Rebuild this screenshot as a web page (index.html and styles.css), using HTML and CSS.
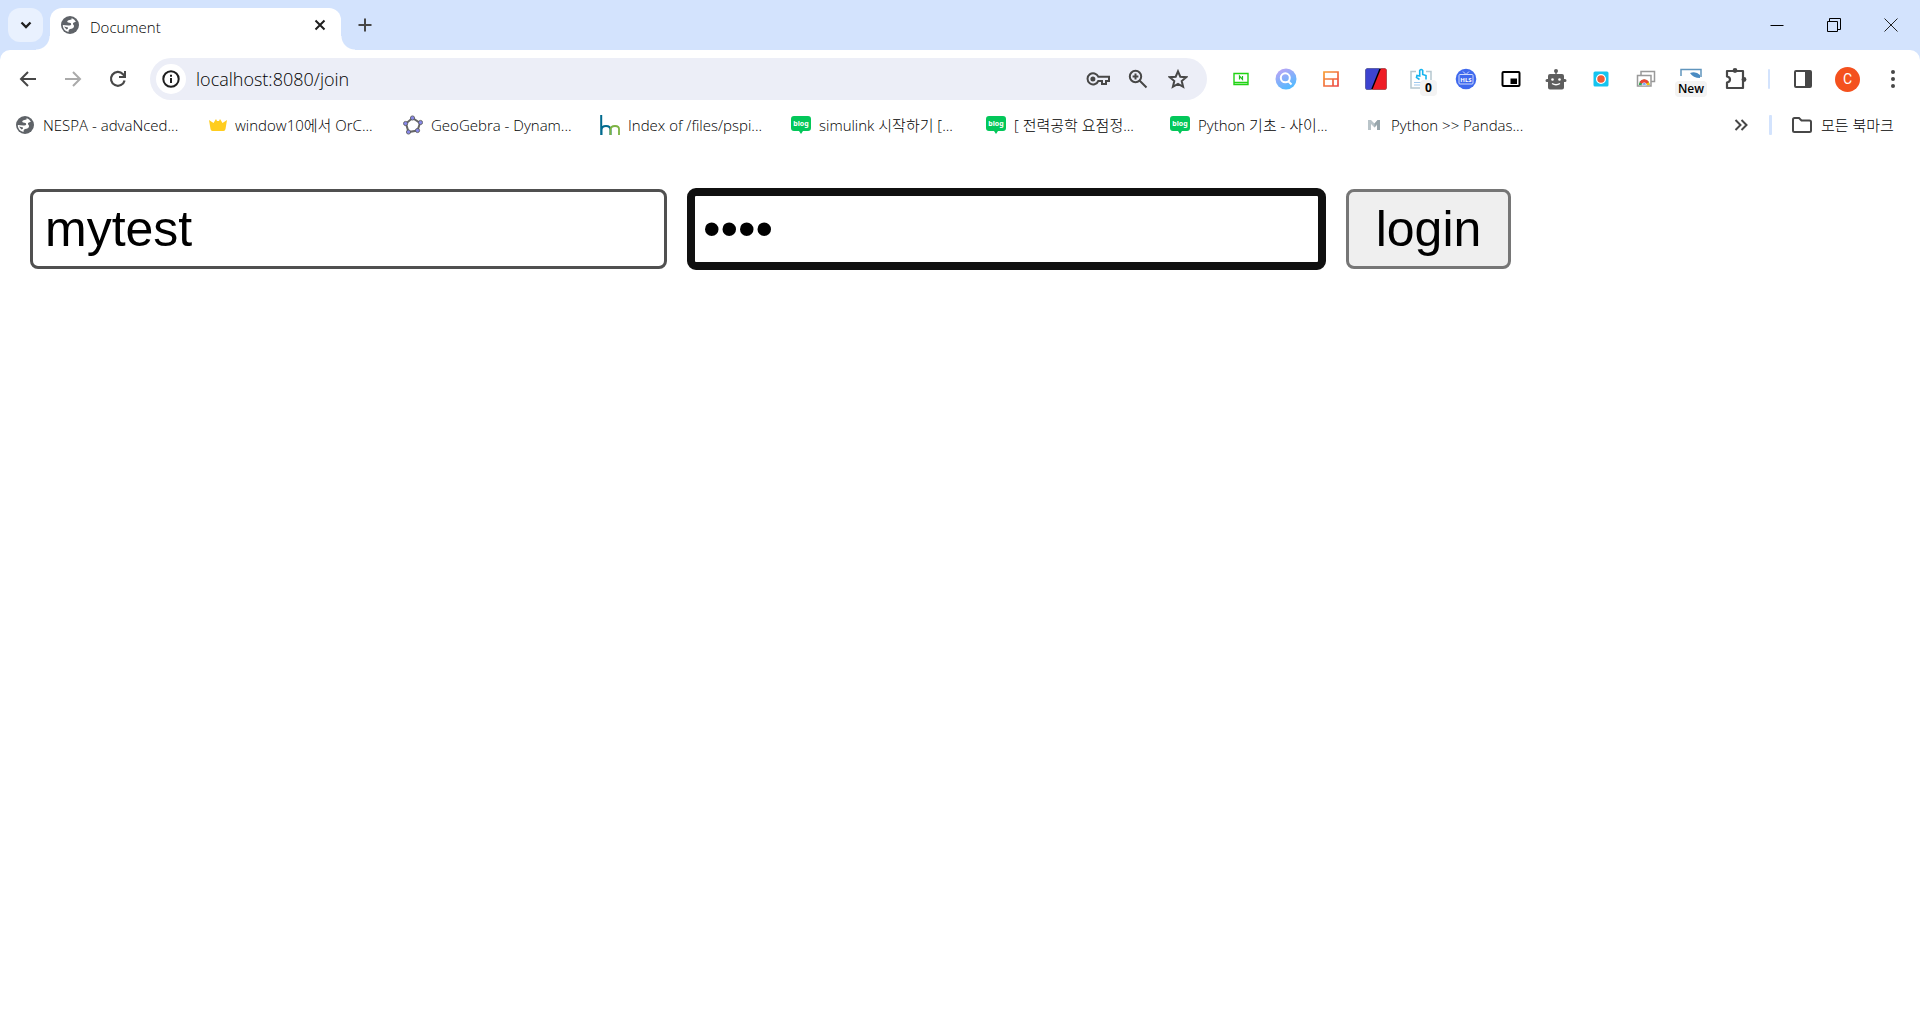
FILE: index.html
```html
<!DOCTYPE html>
<html lang="ko">
<head>
<meta charset="utf-8">
<meta name="viewport" content="width=device-width, initial-scale=1">
<title>Document</title>
<link rel="stylesheet" href="styles.css">
</head>
<body>
<svg class="sprite" width="0" height="0" aria-hidden="true">
  <symbol id="globe" viewBox="0 0 20 20">
    <circle cx="10" cy="10" r="9" fill="#5f6368"/>
    <path d="M11.500 2.900Q12.500 4.200 10.500 4.800L8.500 5.200Q6.800 5.800 7.300 7 7.800 7.800 9.500 7.800 11.500 8 11.200 9.500 10.800 10.700 8.500 10.500L2.800 10Q2.900 14 6 16L8.500 17Q8.200 14.300 10 14 13.500 13.800 14 11.500 14.200 10 13 9.200 12.500 7.500 15.900 6.800 14.500 3.800 11.500 2.900z" fill="#fff"/>
    <path d="M4 11.500 8 12.500Q8.500 14 6.500 14.500z" fill="#5f6368"/>
  </symbol>
  <symbol id="blog" viewBox="0 0 20 20">
    <path d="M3 1h14a3 3 0 0 1 3 3v9a3 3 0 0 1-3 3h-5l-2 3-2-3H3a3 3 0 0 1-3-3V4a3 3 0 0 1 3-3z" fill="#03c75a"/>
  </symbol>
</svg>

<header class="browser">
  <div class="tabstrip">
    <button class="tab-search" aria-label="Search tabs"><svg width="14" height="14" viewBox="0 0 14 14"><path d="M2.500 4.500 7 9l4.500-4.500" fill="none" stroke="#1f1f1f" stroke-width="2.300"/></svg></button>
    <div class="tab">
      <svg width="20" height="20"><use href="#globe"/></svg>
      <span class="tab-title">Document</span>
      <button class="plain" aria-label="Close tab"><svg width="12" height="12" viewBox="0 0 12 12"><path d="m1.500 1.500 9 9m0-9-9 9" stroke="#1f1f1f" stroke-width="2"/></svg></button>
    </div>
    <button class="plain new-tab" aria-label="New tab"><svg width="14" height="14" viewBox="0 0 14 14"><path d="M7 .5v13M.5 7h13" stroke="#474747" stroke-width="2"/></svg></button>
    <div class="window-controls">
      <button aria-label="Minimize"><svg width="14" height="14" viewBox="0 0 14 14"><path d="M.5 7.500h13" stroke="#000"/></svg></button>
      <button aria-label="Restore"><svg width="14" height="14" viewBox="0 0 14 14"><path d="M.5 3.500h10v10H.5zM2.500 3V.5h11v11H11" fill="none" stroke="#000"/></svg></button>
      <button aria-label="Close"><svg width="14" height="14" viewBox="0 0 14 14"><path d="m.5.5 13 13m0-13-13 13" stroke="#222"/></svg></button>
    </div>
  </div>

  <div class="toolbar">
    <nav class="history">
      <button aria-label="Back"><svg width="18" height="18" viewBox="0 0 18 18"><path d="M17 9H2.500M9 2 2 9l7 7" fill="none" stroke="#474747" stroke-width="2"/></svg></button>
      <button aria-label="Forward"><svg width="18" height="18" viewBox="0 0 18 18"><path d="M1 9h14.500M9 2l7 7-7 7" fill="none" stroke="#aaa" stroke-width="2"/></svg></button>
      <button aria-label="Reload"><svg width="18" height="18" viewBox="0 0 18 18"><path d="M15.600 10.500A6.900 6.900 0 1 1 14 4.200l1.500 1.600" fill="none" stroke="#474747" stroke-width="2.200"/><path d="M16 1v6h-6" fill="none" stroke="#474747" stroke-width="2"/></svg></button>
    </nav>
    <div class="omnibox">
      <button class="site-info" aria-label="Site information"><svg width="18" height="18" viewBox="0 0 18 18"><circle cx="9" cy="9" r="7.700" fill="none" stroke="#1f1f1f" stroke-width="2"/><path d="M9 8v5M9 4.700v2" stroke="#1f1f1f" stroke-width="2"/></svg></button>
      <input class="url" type="text" aria-label="Address" value="localhost:8080/join">
      <button class="omni-btn" aria-label="Passwords"><svg width="24" height="16" viewBox="0 0 24 16"><path d="M12.300 5.700A5.600 5.600 0 1 0 12.300 10H16v3h4v-3h3V5.700z" fill="none" stroke="#474747" stroke-width="2"/><circle cx="6.900" cy="8" r="2.500" fill="#474747"/></svg></button>
      <button class="omni-btn" aria-label="Zoom"><svg width="20" height="20" viewBox="0 0 20 20"><circle cx="7.500" cy="7.500" r="5.700" fill="none" stroke="#474747" stroke-width="2"/><path d="m11.500 11.500 7 7M7.500 4.600v5.800M4.600 7.500h5.800" stroke="#474747" stroke-width="2"/></svg></button>
      <button class="omni-btn" aria-label="Bookmark"><svg width="20" height="20" viewBox="0 0 20 20"><path d="m10 2.300 2.300 5.400 5.900.5-4.500 3.900 1.400 5.700-5.100-3-5.100 3 1.400-5.700L1.800 8.200l5.900-.5z" fill="none" stroke="#474747" stroke-width="2"/></svg></button>
    </div>
    <div class="extensions">
      <button aria-label="Naver capture"><svg width="18" height="18" viewBox="0 0 18 18"><path d="M2 3.500h14v11H2zM2 12.500h14" fill="none" stroke="#20d313" stroke-width="1.400"/><path d="M7.500 9.500V6l3 3.500V6" fill="none" stroke="#20c020" stroke-width="1.200"/></svg></button>
      <button aria-label="Image search"><svg width="22" height="22" viewBox="0 0 22 22"><defs><linearGradient id="lens" x2=".5" y2="1"><stop stop-color="#c6a2f4"/><stop offset="1" stop-color="#55b9ff"/></linearGradient></defs><circle cx="11" cy="11" r="10.500" fill="url(#lens)"/><circle cx="10.300" cy="9.800" r="4.500" fill="none" stroke="#fff" stroke-width="2"/><path d="m13.500 13.500 3 3" stroke="#fff" stroke-width="2"/></svg></button>
      <button aria-label="Layout"><svg width="18" height="18" viewBox="0 0 18 18"><defs><linearGradient id="heat" gradientUnits="userSpaceOnUse" x1="2" y1="2" x2="16" y2="16"><stop stop-color="#f79b31"/><stop offset="1" stop-color="#ec4848"/></linearGradient></defs><path d="M2 2h14v14H2zM2 9h14M11 9v7" fill="none" stroke="url(#heat)" stroke-width="1.700"/></svg></button>
      <button aria-label="Split colours"><svg width="22" height="22" viewBox="0 0 22 22"><rect x=".5" y=".5" width="21" height="21" rx="1.500" fill="#000"/><path d="M2 .5h12.500L6 21.500H2a1.500 1.500 0 0 1-1.500-1.500V2A1.500 1.500 0 0 1 2 .5z" fill="#3d43d0"/><path d="M16 .5h4A1.500 1.500 0 0 1 21.500 2v18a1.500 1.500 0 0 1-1.500 1.500H7.500z" fill="#ee1c25"/></svg></button>
      <button class="badged" aria-label="Click counter"><svg width="22" height="22" viewBox="0 0 22 22"><path d="M6 3.500H1V20h10M16 3.500h5V12" fill="none" stroke="#b5c7d0" stroke-width="1.500"/><path d="M4 14.500h7M4 17h7" stroke="#9fc9ee" stroke-width="1.200"/><path d="M9.500 11.500 6.500 9.500 7 7.500 9.700 8V2.500q1.500-2 3 0V6.500l3.300 1V11.500" fill="#fff" stroke="#16b4ef" stroke-width="1.600"/></svg><span class="badge badge-count">0</span></button>
      <button aria-label="HLS player"><svg width="22" height="22" viewBox="0 0 22 22"><circle cx="11" cy="11" r="10.300" fill="#3f69ee"/><rect x="4" y="6.500" width="14" height="9.500" rx="1" fill="none" stroke="#cfdafc"/><path d="m8 3.500 3 3 3-3" fill="none" stroke="#cfdafc"/><text x="11" y="14" class="hls">HLS</text></svg></button>
      <button aria-label="Picture in picture"><svg width="20" height="18" viewBox="0 0 20 18"><rect x="1.500" y="2" width="17" height="14" rx="1" fill="none" stroke="#000" stroke-width="2"/><path d="M9.500 8.500h6.500v5.500H9.500z"/></svg></button>
      <button aria-label="Robot"><svg width="22" height="22" viewBox="0 0 22 22"><g fill="#5e5e5e"><circle cx="11" cy="3" r="2"/><path d="M10.300 4h1.400v3h-1.400zM5 6h12a2 2 0 0 1 2 2v3h1a1.500 1.500 0 0 1 1.500 1.500v0A1.500 1.500 0 0 1 20 14h-1v5.500a2 2 0 0 1-2 2H5a2 2 0 0 1-2-2V14H2a1.500 1.500 0 0 1-1.500-1.500v0A1.500 1.500 0 0 1 2 11h1V8a2 2 0 0 1 2-2z"/></g><circle cx="7.500" cy="11.500" r="1.300" fill="#fff"/><circle cx="14.500" cy="11.500" r="1.300" fill="#fff"/><path d="M7 15.500q4 2.500 8 0" fill="none" stroke="#fff" stroke-width="1.300"/></svg></button>
      <button aria-label="Recorder"><svg width="16" height="16" viewBox="0 0 16 16"><rect x=".5" y=".5" width="15" height="15" rx="1.500" fill="#16c4ef"/><circle cx="8" cy="8" r="4.400" fill="#f05a35" stroke="#fff" stroke-width="1.300"/></svg></button>
      <button aria-label="Tab manager"><svg width="20" height="20" viewBox="0 0 20 20"><path d="M5 2.500h13.500v10H5z" fill="#fff" stroke="#999" stroke-width="1.500"/><path d="M1.500 6.500H15v10.500H1.500z" fill="#fff" stroke="#999" stroke-width="1.500"/><path d="M2.800 16a5.400 5.400 0 0 1 10.800 0z" fill="#34a853"/><path d="M3.500 13.200a5.400 5.400 0 0 1 9.500 0L8.200 16z" fill="#ea4335"/><path d="m13 13.200.6 2.800H8z" fill="#fbbc05"/><path d="M6 16a2.200 2.200 0 0 1 4.400 0z" fill="#4285f4" stroke="#fff" stroke-width=".7"/></svg></button>
      <button class="badged" aria-label="New extension"><svg width="22" height="22" viewBox="0 0 22 22"><path d="M1 8V1.500h20V9" fill="none" stroke="#6095bd" stroke-width="1.500"/><path d="M10 5q6-2 10 2v3q-7 0-10-5z" fill="#4a8bc2"/></svg><span class="badge badge-new">New</span></button>
      <button aria-label="Extensions"><svg width="22" height="22" viewBox="0 0 22 22"><path d="M2 3h16v17H2v-5.500q3-.5 3-3T2 8.500z" fill="none" stroke="#474747" stroke-width="2.200" stroke-linejoin="round"/><circle cx="10" cy="2.500" r="2.400" fill="#474747"/><circle cx="19" cy="11.500" r="2.400" fill="#474747"/></svg></button>
    </div>
    <span class="divider"></span>
    <div class="extensions">
      <button aria-label="Side panel"><svg width="18" height="18" viewBox="0 0 18 18"><rect x="1" y="1" width="16" height="16" rx="1" fill="none" stroke="#474747" stroke-width="2"/><path d="M11 1h6v16h-6z" fill="#474747"/></svg></button>
      <button aria-label="Profile"><span class="avatar">C</span></button>
      <button aria-label="Menu"><svg width="6" height="20" viewBox="0 0 6 20" fill="#474747"><circle cx="3" cy="3" r="2"/><circle cx="3" cy="10" r="2"/><circle cx="3" cy="17" r="2"/></svg></button>
    </div>
  </div>

  <nav class="bookmarks">
    <div class="bookmark-list">
      <a href="#"><svg width="20" height="20"><use href="#globe"/></svg><span>NESPA - advaNced...</span></a>
      <a href="#"><svg width="18" height="20" viewBox="0 0 18 20"><path d="m0 5 4.500 3L7 4h4l2.500 4L18 5l-1.500 9q-.3 2-2 2h-11q-1.700 0-2-2z" fill="#ffcd1f"/><path d="m7 4 1 2h2l1-2z" fill="#fff"/></svg><span>window10에서 OrC...</span></a>
      <a href="#"><svg width="20" height="20" viewBox="0 0 20 20"><path d="m9.500 3 7.500 5-2.500 7.500-9 1.500L3 8.500z" fill="none" stroke="#666" stroke-width="2"/><g fill="#8788e8" stroke="#555" stroke-width=".8"><circle cx="9.500" cy="3" r="2.100"/><circle cx="17.500" cy="7.500" r="2.100"/><circle cx="14.500" cy="15.500" r="2.100"/><circle cx="5.500" cy="17" r="2.100"/><circle cx="2.600" cy="8.500" r="2.100"/></g></svg><span>GeoGebra - Dynam...</span></a>
      <a href="#"><svg width="20" height="20" viewBox="0 0 20 20" fill="none"><path d="M1.200 0v20M1.500 20v-5q0-4 4.500-4t4.500 4v5" stroke="#006a8e" stroke-width="2"/><path d="M10.500 20v-5q0-4 4.500-4t4 4v5" stroke="#7cb342" stroke-width="1.800"/></svg><span>Index of /files/pspi...</span></a>
      <a href="#"><svg width="20" height="20" viewBox="0 0 20 20"><use href="#blog"/><text x="10" y="11" class="blog-text">blog</text></svg><span>simulink 시작하기 [...</span></a>
      <a href="#"><svg width="20" height="20" viewBox="0 0 20 20"><use href="#blog"/><text x="10" y="11" class="blog-text">blog</text></svg><span>[ 전력공학 요점정...</span></a>
      <a href="#"><svg width="20" height="20" viewBox="0 0 20 20"><use href="#blog"/><text x="10" y="11" class="blog-text">blog</text></svg><span>Python 기초 - 사이...</span></a>
      <a href="#"><svg width="18" height="20" viewBox="0 0 18 20"><path d="M3 5v10h3V9l3.500 3.500L13 9v6h2V5h-2L9.500 8.500 6 5z" fill="#b9c4c9"/><path d="M9.500 8.500 12.500 5H15v10h-3V9l-2.500 3.500z" fill="#98a6ac"/></svg><span>Python &gt;&gt; Pandas...</span></a>
    </div>
    <button class="plain overflow" aria-label="More bookmarks"><svg width="14" height="12" viewBox="0 0 14 12"><path d="m1.500 1 5 5-5 5m6-10 5 5-5 5" fill="none" stroke="#474747" stroke-width="2"/></svg></button>
    <span class="divider divider-wide"></span>
    <a class="all" href="#"><svg width="22" height="18" viewBox="0 0 22 18"><path d="M2 3.500q0-1.500 1.500-1.500H8l2.500 2.500h8q1.500 0 1.500 1.500v8.500q0 1.500-1.500 1.500h-15Q2 16 2 14.500z" fill="none" stroke="#474747" stroke-width="2"/></svg><span>모든 북마크</span></a>
  </nav>
</header>

<main>
  <form class="login">
    <input class="field" type="text" aria-label="Username" value="mytest">
    <input class="field field-active" type="password" aria-label="Password" value="1234">
    <button class="submit" type="button">login</button>
  </form>
</main>
</body>
</html>
```

FILE: styles.css
```css
* { box-sizing: border-box; }

body {
  margin: 0;
  background: #fff;
  color: #000;
  font: 300 15px/20px "Open Sans", "Noto Sans CJK KR", sans-serif;
}

svg { display: block; flex: none; }
.sprite { position: absolute; }

button {
  display: flex;
  align-items: center;
  justify-content: center;
  padding: 0;
  border: 0;
  background: none;
  font: inherit;
  color: inherit;
}

a { color: inherit; text-decoration: none; }

.browser { background: #d3e3fd; }

/* Tab strip */
.tabstrip {
  display: flex;
  height: 50px;
  padding-left: 8px;
}

.tab-search {
  width: 35px;
  height: 34px;
  margin-top: 8px;
  border-radius: 12px;
  background: #e9f1fe;
}

.tab {
  position: relative;
  display: flex;
  align-items: center;
  gap: 10px;
  width: 291px;
  margin: 8px 0 0 7px;
  padding: 0 15px 8px 10px;
  border-radius: 12px 12px 0 0;
  background: #fff;
}

.tab::before,
.tab::after {
  content: "";
  position: absolute;
  bottom: 0;
  width: 14px;
  height: 14px;
}

.tab::before {
  right: 100%;
  background: radial-gradient(circle at 0 0, transparent 13px, #fff 14px);
}

.tab::after {
  left: 100%;
  background: radial-gradient(circle at 100% 0, transparent 13px, #fff 14px);
}

.tab-title { flex: 1; padding-top: 4px; }

.new-tab { width: 48px; height: 50px; }

.window-controls { display: flex; margin-left: auto; padding-right: 1px; }
.window-controls button { width: 57px; height: 49px; }

/* Toolbar */
.toolbar {
  display: flex;
  align-items: center;
  height: 58px;
  padding: 0 5px;
  border-radius: 10px 10px 0 0;
  background: #fff;
}

.history { display: flex; flex: none; width: 145px; }
.history button { width: 45px; height: 42px; }

.omnibox {
  display: flex;
  flex: 1;
  align-items: center;
  height: 42px;
  margin-right: 11px;
  padding: 0 9px 0 6px;
  border-radius: 21px;
  background: #eceef7;
}

.site-info {
  width: 30px;
  height: 30px;
  border-radius: 50%;
  background: #fff;
}

.url {
  flex: 1;
  min-width: 0;
  margin-left: 10px;
  padding: 0;
  border: 0;
  background: none;
  color: inherit;
  font: 300 18px/24px "Open Sans", sans-serif;
  outline: none;
}

.omni-btn { width: 40px; height: 40px; }

.extensions { display: flex; }
.extensions button { width: 45px; height: 42px; }

.badged { position: relative; }

.badge {
  position: absolute;
  border-radius: 4px;
  background: #f3f3f3;
  color: #000;
  font-size: 12px;
  line-height: 16px;
  text-align: center;
}

.badge-count { top: 22px; left: 22px; width: 17px; font-weight: 700; }
.badge-new { top: 23px; left: 7px; width: 32px; font-weight: 600; }

.hls {
  fill: #fff;
  font: 700 6px "Noto Sans", sans-serif;
  text-anchor: middle;
}

.divider {
  width: 2px;
  height: 20px;
  margin: 0 10px;
  border-radius: 1px;
  background: #d3e3fd;
}

.avatar {
  width: 25px;
  border-radius: 50%;
  background: #f4511e;
  color: #fff;
  font: 14px/25px Roboto, sans-serif;
}

/* Bookmarks bar */
.bookmarks {
  display: flex;
  align-items: center;
  height: 36px;
  padding: 0 19px 2px 15px;
  background: #fff;
}

.bookmark-list {
  display: grid;
  flex: 1;
  grid-template-columns: 194px 194px 197px 191px 195px 184px 195px auto;
}

.bookmarks a {
  display: flex;
  align-items: center;
  gap: 8px;
  white-space: nowrap;
}

.bookmarks .all { width: 110px; }

.overflow { width: 36px; height: 28px; }

.divider-wide { width: 3px; margin: 0 19px 0 10px; }

.blog-text {
  fill: #fff;
  font: 700 7px "Noto Sans", sans-serif;
  text-anchor: middle;
}

/* Page */
.login {
  display: flex;
  flex-wrap: wrap;
  gap: 21px;
  padding: 45px 30px;
}

.field {
  width: 637px;
  height: 80px;
  padding: 0 12px;
  border: 3px solid #505050;
  border-radius: 8px;
  background: #fff;
  color: #000;
  font: 50px/58px "Liberation Sans", Arial, sans-serif;
}

.field-active {
  outline: 8px solid #101010;
  outline-offset: -7px;
}

.submit {
  width: 165px;
  height: 80px;
  border: 3px solid #767676;
  border-radius: 8px;
  background: #efefef;
  color: #000;
  font: 50px/58px "Liberation Sans", Arial, sans-serif;
}
```
